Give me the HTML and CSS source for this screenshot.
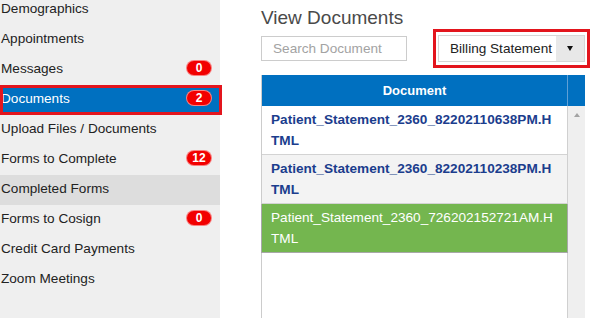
FILE: index.html
```html
<!DOCTYPE html>
<html lang="en">
<head>
<meta charset="utf-8">
<title>View Documents</title>
<link rel="stylesheet" href="styles.css">
</head>
<body>
<div class="app">
  <aside class="sidebar">
    <ul class="nav">
      <li class="nav-item">Demographics</li>
      <li class="nav-item">Appointments</li>
      <li class="nav-item">Messages <span class="badge">0</span></li>
      <li class="nav-item active">Documents <span class="badge">2</span></li>
      <li class="nav-item">Upload Files / Documents</li>
      <li class="nav-item">Forms to Complete <span class="badge">12</span></li>
      <li class="nav-item hovered">Completed Forms</li>
      <li class="nav-item">Forms to Cosign <span class="badge">0</span></li>
      <li class="nav-item">Credit Card Payments</li>
      <li class="nav-item">Zoom Meetings</li>
    </ul>
  </aside>
  <main class="content">
    <h1 class="title">View Documents</h1>
    <div class="toolbar">
      <input class="search" type="text" placeholder="Search Document">
      <div class="select-frame">
        <div class="select">
          <span class="select-label">Billing Statement</span>
          <span class="select-btn"><span class="caret"></span></span>
        </div>
      </div>
    </div>
    <div class="doc-table">
      <div class="doc-main">
        <div class="doc-head">Document</div>
        <div class="doc-row">Patient_Statement_2360_82202110638PM.HTML</div>
        <div class="doc-row alt">Patient_Statement_2360_82202110238PM.HTML</div>
        <div class="doc-row selected">Patient_Statement_2360_726202152721AM.HTML</div>
      </div>
      <div class="scrollbar">
        <div class="scroll-head"></div>
        <div class="scroll-track"><span class="scroll-up"></span></div>
      </div>
    </div>
  </main>
</div>
</body>
</html>
```
FILE: styles.css
```css
* { box-sizing: border-box; }

html, body {
  margin: 0;
  padding: 0;
  background: #ffffff;
}

body {
  font-family: "Liberation Sans", Arial, sans-serif;
  font-size: 13.6px;
  color: #222;
}

.app {
  display: flex;
  width: 600px;
  height: 318px;
  overflow: hidden;
}

.sidebar {
  width: 220px;
  flex: none;
  background: #efefef;
}

.nav {
  list-style: none;
  margin: -5px 0 0;
  padding: 0;
}

.nav-item {
  display: flex;
  align-items: center;
  justify-content: space-between;
  height: 30px;
  padding: 0 8px 3px 1px;
  color: #222;
  position: relative;
}

.nav-item.hovered {
  background: #dddddd;
}

.nav-item.active {
  background: #0070c0;
  color: #fff;
}

.nav-item.active::after {
  content: "";
  position: absolute;
  top: 0;
  bottom: 0;
  left: 0;
  right: -2px;
  border: 3px solid #e3151d;
}

.badge {
  min-width: 26px;
  height: 16px;
  padding: 0 5px;
  margin-bottom: 2px;
  border-radius: 8px;
  border: 1px solid rgba(255, 255, 255, 0.5);
  background: #f20000;
  color: #fff;
  font-size: 12px;
  font-weight: bold;
  line-height: 14px;
  text-align: center;
}

.content {
  flex: 1;
  display: flex;
  flex-direction: column;
  padding: 7px 10px 0 41px;
  min-width: 0;
}

.title {
  margin: 0;
  font-size: 19px;
  font-weight: normal;
  line-height: 22px;
  color: #4a4a4a;
}

.toolbar {
  display: flex;
  align-items: center;
  justify-content: space-between;
  height: 39px;
}

.search {
  width: 146px;
  height: 25px;
  border: 1px solid #cccccc;
  padding: 0 0 0 11px;
  font-family: "Liberation Sans", Arial, sans-serif;
  font-size: 13.6px;
  color: #333;
  outline: none;
}

.search::placeholder {
  color: #a3a3a3;
}

.select-frame {
  width: 157px;
  height: 39px;
  border: 3px solid #e3151d;
  padding: 3px 2px;
  background: #fff;
}

.select {
  display: flex;
  height: 27px;
  border: 1px solid #d6d6d6;
  background: #fff;
}

.select-label {
  flex: 1;
  padding-left: 11px;
  line-height: 25px;
  color: #222;
  white-space: nowrap;
}

.select-btn {
  width: 28px;
  display: flex;
  align-items: center;
  justify-content: center;
  background: #e8e8e8;
}

.caret {
  width: 0;
  height: 0;
  border-left: 3.5px solid transparent;
  border-right: 3.5px solid transparent;
  border-top: 5px solid #111;
}

.doc-table {
  flex: 1;
  display: flex;
  width: 324px;
  margin-top: 7px;
  border-left: 1px solid #cccccc;
}

.doc-main {
  width: 306px;
  display: flex;
  flex-direction: column;
  border-right: 1px solid #d0d0d0;
}

.doc-head {
  height: 31px;
  background: #0070c0;
  color: #fff;
  font-size: 13px;
  font-weight: bold;
  line-height: 31px;
  text-align: center;
  border-right: 1px solid #5fa0d6;
  margin-right: -1px;
}

.doc-row {
  padding: 3px 10px 3px 9px;
  line-height: 21px;
  font-weight: bold;
  color: #1b3d8d;
  word-break: break-all;
  border-bottom: 1px solid #d3d3d3;
  background: #fff;
}

.doc-row.alt {
  background: #f3f3f3;
}

.doc-row.selected {
  background: #74b64f;
  color: #fff;
  font-weight: normal;
  border: 1px solid #a8a8a8;
  border-top: none;
  margin-left: -1px;
  margin-right: -1px;
  padding-left: 9px;
}

.scrollbar {
  width: 17px;
  display: flex;
  flex-direction: column;
}

.scroll-head {
  height: 31px;
  background: #0070c0;
}

.scroll-track {
  flex: 1;
  background: #efefef;
  display: flex;
  justify-content: center;
  padding-top: 7px;
}

.scroll-up {
  width: 0;
  height: 0;
  border-left: 3.5px solid transparent;
  border-right: 3.5px solid transparent;
  border-bottom: 4px solid #a3a3a3;
}
```
